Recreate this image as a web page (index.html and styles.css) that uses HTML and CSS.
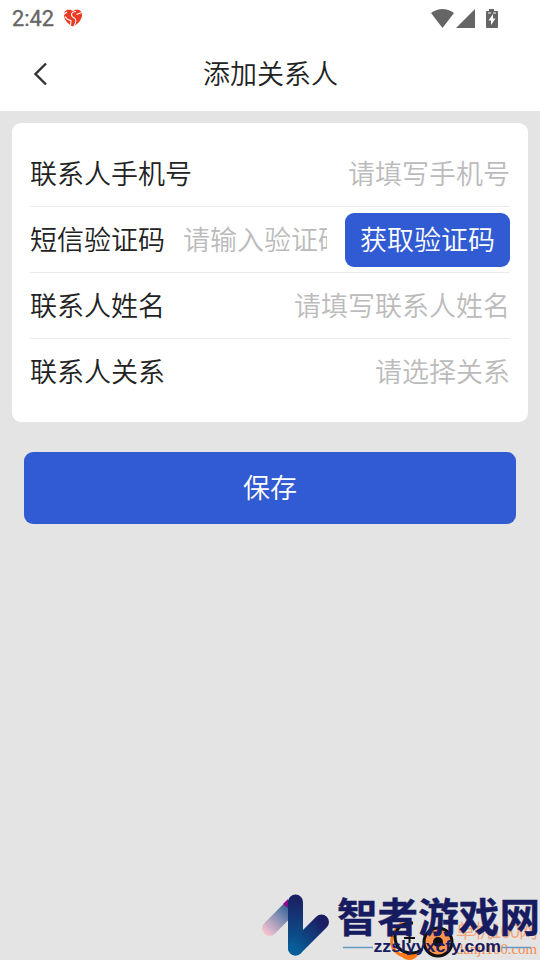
FILE: index.html
```html
<!DOCTYPE html>
<html lang="zh-CN">
<head>
<meta charset="utf-8">
<title>添加关系人</title>
<link rel="stylesheet" href="styles.css">
</head>
<body>
<div class="statusbar">
  <span class="time">2:42</span>
  <svg class="app-icon" width="20" height="18" viewBox="0 0 20 18">
    <path d="M10 17.500C6 16 .8 11 1 6 1 2 3.500 .5 6 .7c2 0 3 .6 4 1.600C11 1 12.500 .5 14 .7c3 0 5.200 2 5 5.500C18.800 11 14 16 10 17.500Z" fill="#e83a25"/>
    <path d="M0 6 4 3M13 2.500Q8.500 3 8.500 5.500T12 9.500Q14 12 11 17M2 7.500Q4 11 8 11.500L7.500 16M13.500 5.500l5-2" fill="none" stroke="#fff" stroke-width="1.100"/>
  </svg>
  <svg class="signals" width="68" height="20" viewBox="0 0 68 20">
    <path d="M0 4Q11.500-4 23 4L11.500 19Z" fill="#656565" transform="translate(0 1)"/>
    <path d="M25 19H44V0Z" fill="#656565" transform="translate(0 1)"/>
    <path d="M58 1h5v2h3q1 0 1 1v15q0 1-1 1H56q-1 0-1-1V4q0-1 1-1h2Z" fill="#656565"/>
    <path d="M57 5h3M62 5h3" stroke="#fff"/>
    <path d="m62 6-4.500 6.500H60V17l4.500-6.500H62Z" fill="#fff"/>
  </svg>
</div>
<header class="header">
  <svg class="back" width="16" height="24" viewBox="0 0 16 24"><path d="M13 1.500 2.500 12 13 22.500" fill="none" stroke="#333" stroke-width="2.400"/></svg>
  <h1>添加关系人</h1>
</header>
<main>
  <section class="card">
    <div class="row"><label>联系人手机号</label><span class="hint">请填写手机号</span></div>
    <div class="row"><label>短信验证码</label><span class="hint code">请输入验证码</span><button class="get-code">获取验证码</button></div>
    <div class="row"><label>联系人姓名</label><span class="hint">请填写联系人姓名</span></div>
    <div class="row"><label>联系人关系</label><span class="hint">请选择关系</span></div>
  </section>
  <button class="save">保存</button>
</main>
<svg class="watermark" width="290" height="75" viewBox="250 885 290 75">
  <defs>
    <linearGradient id="pink" gradientUnits="userSpaceOnUse" x1="264" y1="932" x2="292" y2="903"><stop offset="0" stop-color="#f7c3d0"/><stop offset=".5" stop-color="#8790b4"/><stop offset="1" stop-color="#17538c"/></linearGradient>
    <linearGradient id="blue" gradientUnits="userSpaceOnUse" x1="0" y1="895" x2="0" y2="956"><stop offset="0" stop-color="#1b1d61"/><stop offset="1" stop-color="#05649c"/></linearGradient>
    <linearGradient id="navy" gradientUnits="userSpaceOnUse" x1="295" y1="948" x2="322" y2="921"><stop offset="0" stop-color="#075e98"/><stop offset="1" stop-color="#1b1d61"/></linearGradient>
  </defs>
  <g fill="none" stroke-width="15" stroke-linecap="round">
    <path d="M269.500 928.500 291 907" stroke="url(#pink)"/>
    <path d="M283 904l5-5v9Z" fill="#8b0b86" stroke="none"/>
    <path d="M295.500 902v46" stroke="url(#blue)"/>
    <path d="M295.500 948 321.500 922" stroke="url(#navy)"/>
  </g>
  <g fill="none" stroke-width="3">
    <path d="M402 923Q388 935 393 948q5 9 19 9" stroke="#ff7817"/>
    <path d="M399 953q9-1 20 1-4 6-10 6t-10-7Z" fill="#ff7817"/>
    <path d="M413 923q-15-1-18 13 0 16 16 17 7 0 11-4" stroke="#111"/>
    <path d="M404 938h11M409.500 933v10" stroke="#111" stroke-width="2"/>
    <circle cx="438" cy="942" r="14" fill="#ff944d" stroke="#111"/>
    <circle cx="438" cy="942" r="5" fill="#111" stroke="none"/>
  </g>
  <text class="wm-cn" x="456" y="938" textLength="82">单机100网</text>
  <text class="wm-url" x="456" y="954" textLength="81" lengthAdjust="spacingAndGlyphs">danji100.com</text>
  <text class="brand" x="337" y="932" textLength="203" lengthAdjust="spacingAndGlyphs">智者游戏网</text>
  <path d="M343 947.500h30M502 947.500h29" stroke="#6799c3" stroke-width="1.300"/>
  <text class="brand-url" x="373.500" y="952" textLength="127.500" lengthAdjust="spacingAndGlyphs">zzslyyxcfy.com</text>
</svg>
</body>
</html>
```
FILE: styles.css
```css
* { box-sizing: border-box; }
body {
  margin: 0;
  height: 960px;
  overflow: hidden;
  background: #e4e4e4;
  color: #222;
  font: 350 27px/40px "Noto Sans CJK SC", sans-serif;
}
.statusbar {
  display: flex;
  height: 36px;
  padding: 0 41px 0 12px;
  align-items: center;
  background: #fff;
}
.time {
  width: 42px;
  font: 400 21.800px/36px Roboto, sans-serif;
  color: #666;
  -webkit-text-stroke: .35px #666;
  padding-top: 2px;
}
.app-icon { margin-left: 9px; }
.signals { margin-left: auto; margin-top: -1px; }
.header {
  display: grid;
  grid-template-columns: 60px 1fr 60px;
  align-items: center;
  height: 75px;
  background: #fff;
}
.back { margin-left: 33px; }
h1 {
  margin: 0;
  padding: 0 0 2px 1px;
  font: inherit;
  text-align: center;
}
main { padding: 12px; }
.card {
  height: 299px;
  padding: 18px;
  background: #fff;
  border-radius: 9px;
}
.row {
  display: flex;
  height: 66px;
  align-items: center;
  border-bottom: 1px solid #ebebeb;
}
.row:last-child { border-color: transparent; }
.row label, .hint { padding-bottom: 1px; }
.hint {
  margin-left: auto;
  color: #bbb;
  white-space: nowrap;
}
.code {
  width: 144px;
  margin-left: 18px;
  overflow: hidden;
}
button {
  border: 0;
  padding: 0 0 2px;
  background: #315bd3;
  color: #fff;
  font: inherit;
  border-radius: 9px;
}
.get-code {
  width: 165px;
  height: 54px;
  margin-left: auto;
}
.save {
  display: block;
  width: 492px;
  height: 72px;
  margin: 30px auto 0;
}
.watermark {
  position: absolute;
  right: 0;
  bottom: 0;
}
.brand {
  font: 700 40px "Noto Sans CJK SC", sans-serif;
  fill: #171b60;
  stroke: #171b60;
  stroke-width: .4;
}
.brand-url {
  font: 700 16px "Liberation Sans", sans-serif;
  fill: #171b60;
}
.wm-cn {
  font: 400 19px "Noto Sans CJK SC", sans-serif;
  fill: #f4a77c;
}
.wm-url {
  font: 400 15px "Liberation Serif", serif;
  fill: #f58a4b;
}
```
